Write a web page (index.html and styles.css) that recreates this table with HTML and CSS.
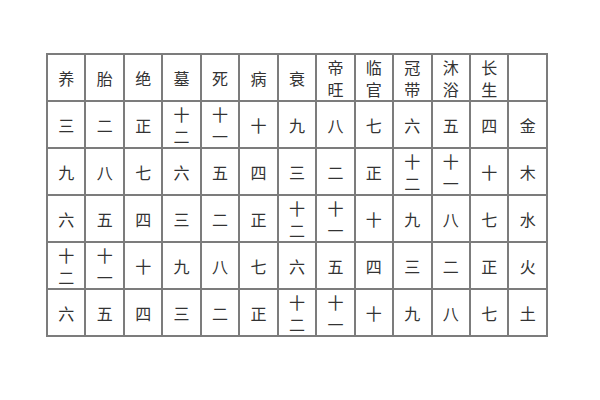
FILE: index.html
```html
<!DOCTYPE html>
<html lang="zh">
<head>
<meta charset="utf-8">
<link rel="stylesheet" href="styles.css">
</head>
<body>
<div class="wrap">
<table class="grid">
<tr><td>养</td><td>胎</td><td>绝</td><td>墓</td><td>死</td><td>病</td><td>衰</td><td class="st">帝<br>旺</td><td class="st">临<br>官</td><td class="st">冠<br>带</td><td class="st">沐<br>浴</td><td class="st">长<br>生</td><td></td></tr>
<tr><td>三</td><td>二</td><td>正</td><td class="st">十<br>二</td><td class="st">十<br>一</td><td>十</td><td>九</td><td>八</td><td>七</td><td>六</td><td>五</td><td>四</td><td>金</td></tr>
<tr><td>九</td><td>八</td><td>七</td><td>六</td><td>五</td><td>四</td><td>三</td><td>二</td><td>正</td><td class="st">十<br>二</td><td class="st">十<br>一</td><td>十</td><td>木</td></tr>
<tr><td>六</td><td>五</td><td>四</td><td>三</td><td>二</td><td>正</td><td class="st">十<br>二</td><td class="st">十<br>一</td><td>十</td><td>九</td><td>八</td><td>七</td><td>水</td></tr>
<tr><td class="st">十<br>二</td><td class="st">十<br>一</td><td>十</td><td>九</td><td>八</td><td>七</td><td>六</td><td>五</td><td>四</td><td>三</td><td>二</td><td>正</td><td>火</td></tr>
<tr><td>六</td><td>五</td><td>四</td><td>三</td><td>二</td><td>正</td><td class="st">十<br>二</td><td class="st">十<br>一</td><td>十</td><td>九</td><td>八</td><td>七</td><td>土</td></tr>
</table>
</div>
</body>
</html>
```
FILE: styles.css
```css
html, body {
  margin: 0;
  padding: 0;
  background: #ffffff;
}
.wrap {
  padding: 53px 0 0 46px;
}
.grid {
  border-collapse: collapse;
  table-layout: fixed;
  width: 502px;
  font-family: "Noto Sans CJK SC", "Noto Sans CJK JP", sans-serif;
  font-size: 16px;
  color: #333333;
}
.grid td {
  border: 2px solid #7c7c7c;
  height: 45px;
  padding: 0;
  text-align: center;
  vertical-align: middle;
  line-height: 20px;
}
.grid td.st {
  line-height: 22px;
}
```
